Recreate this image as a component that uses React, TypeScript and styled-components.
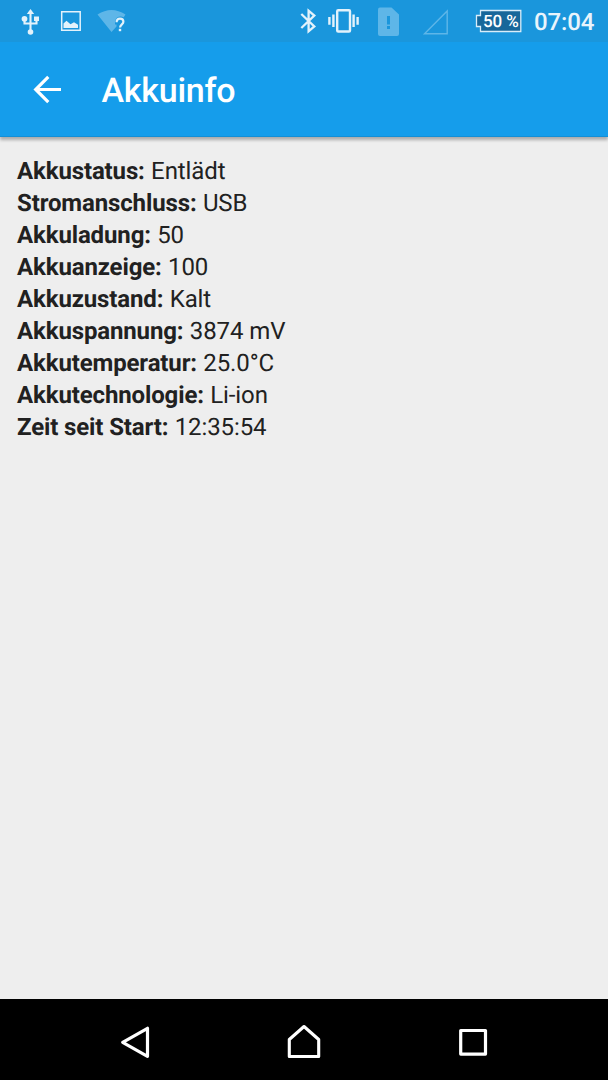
import React from 'react';
import styled, { createGlobalStyle } from 'styled-components';

const GlobalStyle = createGlobalStyle`
  * { box-sizing: border-box; }
  body {
    margin: 0;
    background: #eeeeee;
    font-family: Roboto, "Liberation Sans", sans-serif;
    text-rendering: geometricPrecision;
  }
`;

const Screen = styled.div`
  display: flex;
  flex-direction: column;
  width: 608px;
  height: 1080px;
  overflow: hidden;
  background: #eeeeee;
`;

const StatusBar = styled.header`
  display: flex;
  flex: none;
  justify-content: space-between;
  height: 42px;
  padding: 0 14px 0 20px;
  background: #1a96dc;
`;

const IconGroup = styled.div`
  display: flex;
  align-items: flex-start;
`;

const Icon = styled.svg<{ $gap?: number }>`
  display: block;
  flex: none;
  margin-left: ${(p) => p.$gap ?? 0}px;
`;

const Clock = styled.time`
  width: 60px;
  margin-left: 11px;
  color: #e8f4fc;
  font-size: 24px;
  font-weight: 500;
  letter-spacing: -0.1px;
  line-height: 44px;
  white-space: nowrap;
`;

const AppBar = styled.div`
  display: flex;
  flex: none;
  align-items: center;
  height: 95px;
  padding: 0 0 0 33px;
  background: #159deb;
  border-bottom: 1px solid #148fd6;
  box-shadow: 0 3px 3px rgba(0, 0, 0, 0.28);
`;

const BackButton = styled.button`
  display: flex;
  padding: 0;
  border: 0;
  background: none;
`;

const Title = styled.h1`
  margin: 4px 0 0 39.5px;
  color: #ffffff;
  font-size: 34px;
  font-weight: 500;
  letter-spacing: -0.25px;
  line-height: 40px;
`;

const Info = styled.main`
  flex: 1;
  padding: 18px 17px;
  color: #212121;
`;

const Row = styled.div`
  height: 32px;
  font-size: 24px;
  font-weight: 400;
  letter-spacing: -0.1px;
  line-height: 32px;
  white-space: nowrap;
`;

const Label = styled.strong`
  margin-right: 0.5px;
  font-weight: 700;
  letter-spacing: -0.13px;
`;

const NavBar = styled.nav`
  display: flex;
  flex: none;
  align-items: center;
  justify-content: center;
  gap: 129px;
  height: 81px;
  padding-top: 5px;
  background: #000000;
`;

const NavButton = styled.button`
  display: flex;
  padding: 0;
  border: 0;
  background: none;
`;

const details: [string, string][] = [
  ['Akkustatus', 'Entlädt'],
  ['Stromanschluss', 'USB'],
  ['Akkuladung', '50'],
  ['Akkuanzeige', '100'],
  ['Akkuzustand', 'Kalt'],
  ['Akkuspannung', '3874 mV'],
  ['Akkutemperatur', '25.0°C'],
  ['Akkutechnologie', 'Li-ion'],
  ['Zeit seit Start', '12:35:54'],
];

const BatteryBox = styled.div`
  position: relative;
  width: 48px;
  height: 42px;
  margin-left: 26px;
`;

const BatteryText = styled.span`
  position: absolute;
  top: 11px;
  left: 8px;
  color: #ffffff;
  font-size: 17px;
  font-weight: 500;
  letter-spacing: -0.1px;
  line-height: 22px;
  white-space: nowrap;
`;

const light = '#e3f2fb';
const dim = '#5eb6e8';

const UsbIcon = () => (
  <Icon width="22" height="42" viewBox="20 0 22 42" fill={light}>
    <path d="M30.5 9l3.700 5h-7.400z" />
    <path d="M30.5 13v19M24.5 19v4.500h12V19" fill="none" stroke={light} strokeWidth="2.1" />
    <circle cx="24.5" cy="18.8" r="2.9" />
    <path d="M34 16.500h5v4.500h-5z" />
    <circle cx="30.5" cy="32" r="2.8" />
  </Icon>
);

const ImageIcon = () => (
  <Icon width="22" height="42" viewBox="60 0 22 42" $gap={18}>
    <path d="M61.7 11.700h18.500v18.600H61.700z" fill="none" stroke={light} strokeWidth="1.5" />
    <path d="M63.500 28v-4.500l3-2.800 4 3.600 3.500-2 4 2.500v3.200z" fill={light} />
  </Icon>
);

const WifiIcon = () => (
  <Icon width="30" height="42" viewBox="97 0 30 42" $gap={15}>
    <path d="M97.500 14.500Q111.500 5.500 125.500 14.500L123.700 17.200Q120 15.500 116.500 18L115 21v3.500h1.500v2L111.500 32z" fill={dim} />
    <path d="M116.600 22.300c0-2.400 1.300-3.700 3.400-3.700s3.400 1.300 3.400 3.200c0 2.500-3.300 2.700-3.300 5.700" fill="none" stroke={light} strokeWidth="2.2" />
    <path d="M118.800 28.800h2.400v2.400h-2.400z" fill={light} />
  </Icon>
);

const BluetoothIcon = () => (
  <Icon width="18" height="42" viewBox="299 0 18 42">
    <path d="M301.300 14l13 12.500-5.700 4.800V10.700l5.700 4.800-13 12.500" fill="none" stroke={light} strokeWidth="2.300" />
  </Icon>
);

const VibrateIcon = () => (
  <Icon width="32" height="42" viewBox="328 0 32 42" $gap={11}>
    <rect x="337.200" y="10.200" width="12.800" height="21.300" rx="1" fill="none" stroke={light} strokeWidth="2.400" />
    <path d="M333.400 14.500v12.500M329.400 17v7.700M353.600 14.500v12.500M357.600 17v7.700" stroke={light} strokeWidth="2.400" />
  </Icon>
);

const SimIcon = () => (
  <Icon width="22" height="42" viewBox="378 0 22 42" $gap={18}>
    <path d="M380 7.500h11.500l7.500 7V34q0 2-2 2H380q-2 0-2-2V9.500q0-2 2-2z" fill={dim} />
    <path d="M387 16h3v8.500h-3zM387 26h3v3h-3z" fill="#1a96dc" />
  </Icon>
);

const SignalIcon = () => (
  <Icon width="27" height="42" viewBox="422 0 27 42" $gap={22}>
    <path d="M424.500 33.800H447.200V11z" fill="none" stroke={dim} strokeWidth="1.400" />
  </Icon>
);

const Battery = () => (
  <BatteryBox>
    <Icon width="48" height="42" viewBox="475 0 48 42">
      <path d="M480.500 10.500h40.300v21h-40.300v-5h-4V15.500h4z" fill="#17679a" stroke="#d9edf9" strokeWidth="1.300" />
    </Icon>
    <BatteryText>50 %</BatteryText>
  </BatteryBox>
);

export default function App() {
  return (
    <Screen>
      <GlobalStyle />
      <StatusBar>
        <IconGroup>
          <UsbIcon />
          <ImageIcon />
          <WifiIcon />
        </IconGroup>
        <IconGroup>
          <BluetoothIcon />
          <VibrateIcon />
          <SimIcon />
          <SignalIcon />
          <Battery />
          <Clock>07:04</Clock>
        </IconGroup>
      </StatusBar>
      <AppBar>
        <BackButton aria-label="Zurück">
          <Icon width="29" height="30" viewBox="33 74 29 30">
            <path d="M61 89.500H36M48.300 76.800L35.700 89.500l12.600 12.600" fill="none" stroke="#ffffff" strokeWidth="3.200" />
          </Icon>
        </BackButton>
        <Title>Akkuinfo</Title>
      </AppBar>
      <Info>
        {details.map(([label, value]) => (
          <Row key={label}>
            <Label>{label}:</Label> {value}
          </Row>
        ))}
      </Info>
      <NavBar>
        <NavButton aria-label="Zurück">
          <Icon width="40" height="40" viewBox="115 1022 40 40">
            <path d="M147.500 1028.300v28L122.700 1042.300z" fill="none" stroke="#ffffff" strokeWidth="3.200" strokeLinejoin="round" />
          </Icon>
        </NavButton>
        <NavButton aria-label="Startseite">
          <Icon width="40" height="40" viewBox="284 1022 40 40">
            <path d="M289.300 1056.500V1039.500L304 1026.500l14.700 13v17z" fill="none" stroke="#ffffff" strokeWidth="3.100" strokeLinejoin="round" />
          </Icon>
        </NavButton>
        <NavButton aria-label="Übersicht">
          <Icon width="40" height="40" viewBox="453 1022 40 40">
            <path d="M460.700 1030.500h24.800v23.600h-24.800z" fill="none" stroke="#ffffff" strokeWidth="3.200" strokeLinejoin="round" />
          </Icon>
        </NavButton>
      </NavBar>
    </Screen>
  );
}
